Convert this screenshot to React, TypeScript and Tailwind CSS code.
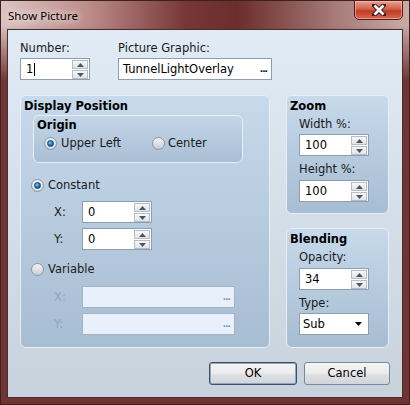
import { ReactNode } from "react"

const Arrow = ({ up, color = "#555" }: { up?: boolean; color?: string }) => (
  <svg width="7" height="4" viewBox="0 0 7 4">
    {up ? <path d="M0 4 L3.5 0 L7 4 Z" fill={color} /> : <path d="M0 0 L7 0 L3.5 4 Z" fill={color} />}
  </svg>
)

const SpinBtn = ({ up }: { up?: boolean }) => (
  <div className="w-[16px] h-[9px] flex items-center justify-center border border-[#b4bdc8] bg-[linear-gradient(180deg,#f7f8fa,#dfe3e8)]">
    <Arrow up={up} color="#4f5560" />
  </div>
)

const Spin = ({ value, caret, className = "" }: { value: string; caret?: boolean; className?: string }) => (
  <div className={"w-[70px] h-[22px] bg-white border border-[#8e9db0] flex items-center justify-between pl-[5px] pr-[1px] " + className}>
    <div className="flex items-center">
      <span className="text-black">{value}</span>
      {caret && <span className="w-px h-[13px] bg-black ml-px" />}
    </div>
    <div className="flex flex-col gap-px self-start mt-px">
      <SpinBtn up />
      <SpinBtn />
    </div>
  </div>
)

const Radio = ({ checked }: { checked?: boolean }) => (
  <div className="w-[13px] h-[13px] rounded-full border border-[#8a96a4] bg-[linear-gradient(180deg,#f4f4f4,#c9cdd2)] flex items-center justify-center shrink-0">
    {checked && (
      <div className="w-[9px] h-[9px] rounded-full bg-[#e9eef3] flex items-center justify-center">
        <div className="w-[7px] h-[7px] rounded-full border border-[#0f3f6e] bg-[radial-gradient(circle_at_40%_35%,#7fc6f2,#1a68b0_60%,#0d3f78)]" />
      </div>
    )}
  </div>
)

const Group = ({ className, children }: { className: string; children: ReactNode }) => (
  <div className={"rounded-[6px] border border-[#e6eef7] bg-[linear-gradient(180deg,#c7d9eb,#a7bdd2)] flex flex-col " + className}>{children}</div>
)

const DisabledField = ({ label, className = "" }: { label: string; className?: string }) => (
  <div className={"flex items-center pl-[30px] " + className}>
    <span className="w-[28px] text-[#97a3b8]">{label}</span>
    <div className="w-[153px] h-[22px] border border-[#a3b2c4] bg-[#e8f1fb] flex items-center justify-end pr-[4px]">
      <span className="text-[#8794a6] font-bold text-[9px] tracking-[-1px]">...</span>
    </div>
  </div>
)

const App = () => {
  return (
    <div className="w-[410px] h-[405px] relative flex flex-col border border-[#3d2020] bg-[linear-gradient(180deg,rgba(112,52,50,0)_0px,rgba(112,52,50,0)_24px,rgba(112,52,50,1)_80px),linear-gradient(90deg,#dcc4c2_0%,#bb8b89_22%,#773739_45%,#6c2d2d_58%,#a67b79_82%,#c9abaa_100%)] font-['DejaVu_Sans',sans-serif] text-[11.5px] leading-[13px] text-[#1a1a1a]">
      {/* title bar */}
      <div className="h-[28px] flex items-center pl-[7px]">
        <span className="font-['Noto_Sans',sans-serif] text-[11.5px] text-black [text-shadow:0_0_6px_#f3e6e5,0_0_10px_#f3e6e5]">Show Picture</span>
      </div>
      <div className="absolute top-[-1px] right-[6px] w-[49px] h-[20px] rounded-b-[5px] border border-[#4d1f1c] bg-[linear-gradient(180deg,#e9a290_0%,#d0604a_45%,#c03a22_55%,#d9684c_100%)] flex items-center justify-center shadow-[inset_0_0_0_1px_rgba(255,210,200,0.5)]">
        <svg width="14" height="12" viewBox="0 0 14 12">
          <path d="M2 1 L12 11 M12 1 L2 11" stroke="#3a1a18" strokeWidth="4.5" strokeLinecap="square" />
          <path d="M2.5 1.5 L11.5 10.5 M11.5 1.5 L2.5 10.5" stroke="#fff" strokeWidth="2.6" />
        </svg>
      </div>

      {/* content */}
      <div className="flex-1 mx-[6px] mb-[6px] border border-[#4a2c2b] bg-[linear-gradient(180deg,#e0ebf6,#c7d2dc)] flex flex-col px-[12px] pt-[12px]">
        <div className="flex gap-[28px]">
          <div className="flex flex-col">
            <span>Number:</span>
            <Spin value="1" caret className="mt-[3px]" />
          </div>
          <div className="flex flex-col">
            <span>Picture Graphic:</span>
            <div className="mt-[3px] w-[154px] h-[22px] bg-white border border-[#8e9db0] flex items-center justify-between pl-[4px] pr-[4px]">
              <span className="text-black">TunnelLightOverlay</span>
              <span className="text-black font-bold text-[9px] tracking-[-1px]">...</span>
            </div>
          </div>
        </div>

        <div className="flex gap-[16px] mt-[15px]">
          <Group className="w-[250px] h-[253px] pl-[3px]">
            <span className="font-bold text-black mt-[4px]">Display Position</span>
            <div className="ml-[9px] mt-[2px] w-[210px] h-[48px] rounded-[6px] border border-[#e6eef7] bg-[linear-gradient(180deg,#c4d6e8,#a9bfd4)] flex flex-col pl-[3px]">
              <span className="font-bold text-black mt-[3px]">Origin</span>
              <div className="flex items-center mt-[5px] pl-[7px]">
                <div className="flex items-center gap-[4px] w-[108px]">
                  <Radio checked />
                  <span>Upper Left</span>
                </div>
                <div className="flex items-center gap-[3px]">
                  <Radio />
                  <span>Center</span>
                </div>
              </div>
            </div>
            <div className="flex items-center gap-[4px] mt-[16px] pl-[7px]">
              <Radio checked />
              <span>Constant</span>
            </div>
            <div className="flex items-center pl-[30px] mt-[9px]">
              <span className="w-[28px]">X:</span>
              <Spin value="0" />
            </div>
            <div className="flex items-center pl-[30px] mt-[5px]">
              <span className="w-[28px]">Y:</span>
              <Spin value="0" />
            </div>
            <div className="flex items-center gap-[4px] mt-[13px] pl-[7px]">
              <Radio />
              <span>Variable</span>
            </div>
            <DisabledField label="X:" className="mt-[10px]" />
            <DisabledField label="Y:" className="mt-[5px]" />
          </Group>

          <div className="flex flex-col gap-[14px]">
            <Group className="w-[103px] h-[119px] pl-[3px]">
              <span className="font-bold text-black mt-[4px]">Zoom</span>
              <div className="flex flex-col pl-[9px]">
                <span className="mt-[5px]">Width %:</span>
                <Spin value="100" className="mt-[3px]" />
                <span className="mt-[7px]">Height %:</span>
                <Spin value="100" className="mt-[4px]" />
              </div>
            </Group>
            <Group className="w-[103px] h-[120px] pl-[3px]">
              <span className="font-bold text-black mt-[4px]">Blending</span>
              <div className="flex flex-col pl-[9px]">
                <span className="mt-[5px]">Opacity:</span>
                <Spin value="34" className="mt-[4px]" />
                <span className="mt-[7px]">Type:</span>
                <div className="mt-[3px] w-[70px] h-[22px] bg-white border border-[#8e9db0] flex items-center justify-between pl-[3px] pr-[6px]">
                  <span className="text-black">Sub</span>
                  <Arrow color="#000" />
                </div>
              </div>
            </Group>
          </div>
        </div>

        <div className="flex justify-end gap-[7px] mt-[14px]">
          <button className="w-[88px] h-[23px] rounded-[3px] border border-[#3c4f66] shadow-[inset_0_0_0_1px_#8fa6bf] bg-[linear-gradient(180deg,#f4f4f4_0%,#ebebeb_50%,#dfe1e4_51%,#d1d5da_100%)] text-black">OK</button>
          <button className="w-[86px] h-[23px] rounded-[3px] border border-[#7b8898] bg-[linear-gradient(180deg,#f4f4f4_0%,#ebebeb_50%,#dfe1e4_51%,#d1d5da_100%)] text-black">Cancel</button>
        </div>
      </div>
    </div>
  )
}

export default App
